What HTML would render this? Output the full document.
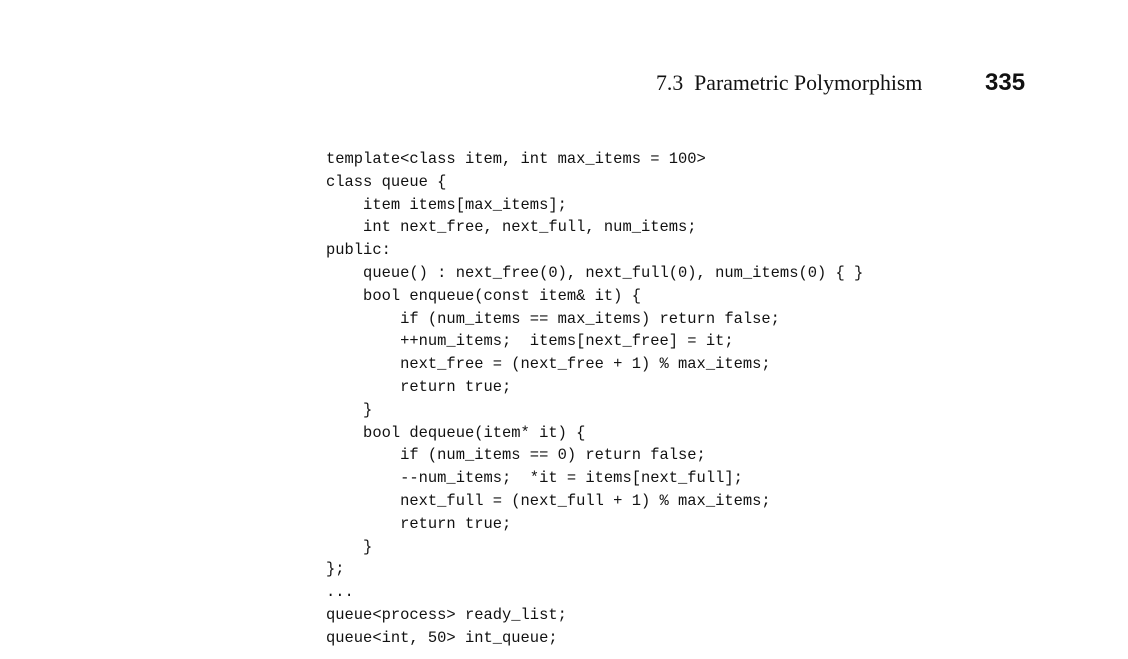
<!DOCTYPE html>
<html><head><meta charset="utf-8"><style>
html,body{margin:0;padding:0;background:#fff;width:1128px;height:659px;overflow:hidden;position:relative;color:#111}
.h{position:absolute;top:69px;left:656px;font:21.8px/28px "Liberation Serif",serif;white-space:pre}
.n{position:absolute;top:69px;left:985px;font:bold 24px/28px "Liberation Sans",sans-serif}
pre{position:absolute;top:148px;left:326px;margin:0;font:15.45px/22.8px "Liberation Mono",monospace;color:#111}
</style></head><body>
<div class="h">7.3  Parametric Polymorphism</div>
<div class="n">335</div>
<pre>template&lt;class item, int max_items = 100&gt;
class queue {
    item items[max_items];
    int next_free, next_full, num_items;
public:
    queue() : next_free(0), next_full(0), num_items(0) { }
    bool enqueue(const item&amp; it) {
        if (num_items == max_items) return false;
        ++num_items;  items[next_free] = it;
        next_free = (next_free + 1) % max_items;
        return true;
    }
    bool dequeue(item* it) {
        if (num_items == 0) return false;
        --num_items;  *it = items[next_full];
        next_full = (next_full + 1) % max_items;
        return true;
    }
};
...
queue&lt;process&gt; ready_list;
queue&lt;int, 50&gt; int_queue;</pre>
</body></html>
